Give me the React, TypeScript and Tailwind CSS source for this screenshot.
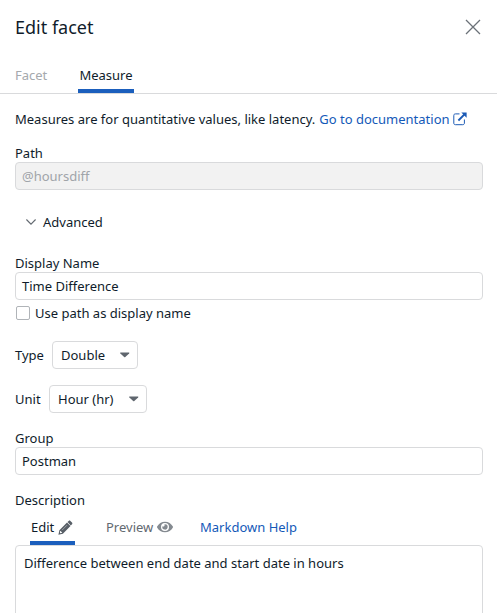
import React from "react";
import { FaEye } from "react-icons/fa";

function TextField({ value, disabled = false }: { value: string; disabled?: boolean }) {
  return (
    <div
      className={
        "flex h-7 items-center rounded border border-[#d9dadc] px-1.5 " +
        (disabled ? "bg-[#f2f2f2] text-[#a0a4a9]" : "bg-white")
      }
    >
      {value}
    </div>
  );
}

function Label({ children }: { children: React.ReactNode }) {
  return <div className="h-[18px]">{children}</div>;
}

function Select({ value, className }: { value: string; className: string }) {
  return (
    <button
      className={
        "flex h-7 items-center justify-between rounded border border-[#d9dadc] bg-white pr-[7.5px] pl-2 " + className
      }
    >
      <span>{value}</span>
      <svg width="9.5" height="6" viewBox="0 0 10 6" preserveAspectRatio="none" fill="#5f666e">
        <path d="M.8.5h8.4c.6 0 .8.5.4.9L5.6 5.1a.9.9 0 0 1-1.2 0L.4 1.4C0 1 .2.5.8.5Z" />
      </svg>
    </button>
  );
}

function ExternalIcon() {
  return (
    <svg className="ml-[3px] shrink-0" width="14" height="14" viewBox="0 0 14 14" fill="none" stroke="#1b5ab5">
      <path d="M6.500 1.900H2.500C1.300 1.900.8 2.500.8 3.600v7.400c0 1.100.5 1.700 1.700 1.700h7.200c1.100 0 1.700-.6 1.700-1.700V7.500" strokeWidth="1" />
      <path d="m5.400 8.500 6.300-6.400" strokeWidth="1.9" />
      <path d="M8.300.4h5.300v5.300Z" fill="#1b5ab5" stroke="none" />
    </svg>
  );
}

function PencilIcon() {
  return (
    <svg className="ml-1" width="15" height="15" viewBox="0 0 15 15" fill="#585f67">
      <path d="M10.700.9c.5-.5 1.200-.5 1.700 0l1.600 1.600c.5.5.5 1.200 0 1.700l-1.200 1.200-3.300-3.300Z" />
      <path
        fillRule="evenodd"
        d="m9 2.600 3.500 3.500-7.600 7.600-4.500 1 1-4.500ZM2.300 11.100l-.4 1.600.5.500 1.600-.4-.1-.9-.8-.1-.1-.7Z"
      />
      <path d="m4 10.200 5-5" stroke="white" strokeOpacity=".7" strokeWidth=".6" />
    </svg>
  );
}

export default function App() {
  return (
    <main className="h-[613px] w-full overflow-hidden bg-white font-['Noto_Sans',sans-serif] text-[13px] leading-[18px] text-[#0f1c2b]">
      <header className="flex h-[55px] items-center justify-between pr-4 pb-[2px] pl-[15px]">
        <h1 className="text-[18px] leading-6">Edit facet</h1>
        <button aria-label="Close">
          <svg width="16" height="16" viewBox="0 0 16 16" stroke="#6b7178" strokeWidth="1.3">
            <path d="m1 1 14 14M15 1 1 15" />
          </svg>
        </button>
      </header>

      <nav className="flex h-[39px] border-b border-[#d9dadc] pl-[15px]">
        <span className="w-[63px] pt-[11px] text-[#a5a9ad]">Facet</span>
        <span className="flex h-[38px] w-14 justify-center border-b-4 border-[#1b5fbd] pt-[11px]">Measure</span>
      </nav>

      <div className="px-[15px] pr-3.5 pt-4">
        <p className="flex h-[18px] items-center whitespace-nowrap">
          Measures are for quantitative values, like latency.
          <a className="ml-1 flex items-center text-[#1459b8]">
            Go to documentation
            <ExternalIcon />
          </a>
        </p>

        <section className="pt-4">
          <Label>Path</Label>
          <TextField value="@hoursdiff" disabled />
        </section>

        <div className="mt-[23px] flex h-[18px] items-center gap-[7px] pl-[11px]">
          <svg width="10" height="6" viewBox="0 0 10 6" fill="none" stroke="#626970" strokeWidth="1.1">
            <path d="m.4.5 4.600 4.700L9.600.5" />
          </svg>
          <span>Advanced</span>
        </div>

        <section className="pt-[23px]">
          <Label>Display Name</Label>
          <TextField value="Time Difference" />
          <label className="mt-1 flex h-[18px] items-center pl-px">
            <span className="mr-[5px] size-3.5 rounded-[2px] border border-[#b0b4b8] bg-white" />
            Use path as display name
          </label>
        </section>

        <div className="mt-[19px] flex items-center">
          <span className="w-[37px]">Type</span>
          <Select value="Double" className="w-[86px]" />
        </div>

        <div className="mt-4 flex items-center">
          <span className="w-[34px]">Unit</span>
          <Select value="Hour (hr)" className="w-[98px]" />
        </div>

        <section className="pt-4">
          <Label>Group</Label>
          <TextField value="Postman" />
        </section>

        <section className="pt-4">
          <Label>Description</Label>
          <div className="flex h-9 pl-[15px]">
            <span className="flex w-[45px] items-center border-b-4 border-[#1b5fbd] pt-1 pl-px">
              Edit
              <PencilIcon />
            </span>
            <span className="ml-[31px] flex h-9 w-[94px] items-center text-[#626970]">
              Preview
              <FaEye className="ml-1 size-4 text-[#848a90]" />
            </span>
            <a className="flex h-9 items-center text-[#1459b8]">Markdown Help</a>
          </div>
          <div className="h-24 rounded-t border border-[#d9dadc] px-2 pt-2">
            Difference between end date and start date in hours
          </div>
        </section>
      </div>
    </main>
  );
}
